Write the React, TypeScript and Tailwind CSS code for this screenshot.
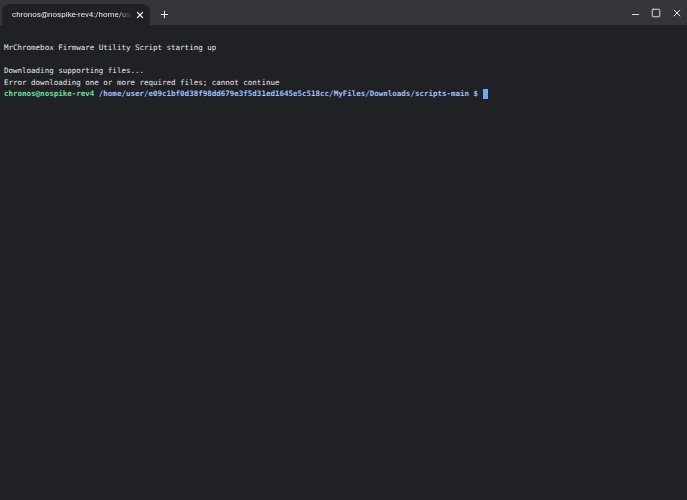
import { Plus, X, Minus, Square } from 'lucide-react';

const MONO = { fontFamily: '"DejaVu Sans Mono", "Liberation Mono", monospace' };

function TitleBar() {
  return (
    <div className="flex h-[25px] items-end bg-[#35363a] pl-[2px]">
      <div className="relative flex h-[21px] w-[148px] items-center rounded-t-[8px] bg-[#202124] pl-[10px] pr-[4px]">
        <span
          className="flex-1 overflow-hidden whitespace-nowrap text-[8px] text-[#e8eaed]"
          style={{
            fontFamily: '"Roboto", "Noto Sans", sans-serif',
            maskImage: 'linear-gradient(to right, black 88%, transparent)',
          }}
        >
          chronos@nospike-rev4:/home/user/e0
        </span>
        <X className="ml-[3px] mr-[1px] h-[10px] w-[10px] text-[#e8eaed]" strokeWidth={3} />
      </div>
      <div className="flex h-[21px] w-[28px] items-center justify-center">
        <Plus className="h-[11px] w-[11px] text-[#e8eaed]" strokeWidth={2.2} />
      </div>
      <div className="flex-1" />
      <div className="flex h-[25px] items-center gap-[10px] pr-[4px] text-[#e8eaed]">
        <Minus className="mt-[4px] h-[11px] w-[11px]" strokeWidth={2} />
        <Square className="h-[10px] w-[10px]" strokeWidth={2.2} />
        <X className="h-[12px] w-[12px]" strokeWidth={2} />
      </div>
    </div>
  );
}

function Terminal() {
  return (
    <div
      className="h-[475px] bg-[#202124] px-[4px] pt-[17px] text-[7.5px] leading-[11.5px] text-[#e8eaed]"
      style={MONO}
    >
      <div className="whitespace-pre">MrChromebox Firmware Utility Script starting up</div>
      <div className="whitespace-pre"> </div>
      <div className="whitespace-pre">Downloading supporting files...</div>
      <div className="whitespace-pre">Error downloading one or more required files; cannot continue</div>
      <div className="flex items-center whitespace-pre font-bold">
        <span className="text-[#6fe0a0]">chronos@nospike-rev4</span>
        <span> </span>
        <span className="text-[#9ec2ff]">
          /home/user/e09c1bf0d38f98dd679e3f5d31ed1645e5c518cc/MyFiles/Downloads/scripts-main $
        </span>
        <span> </span>
        <span className="inline-block h-[10px] w-[5px] bg-[#6fa8f7]" />
      </div>
    </div>
  );
}

export default function App() {
  return (
    <div className="h-[500px] w-[687px] overflow-hidden bg-[#202124]">
      <TitleBar />
      <Terminal />
    </div>
  );
}
